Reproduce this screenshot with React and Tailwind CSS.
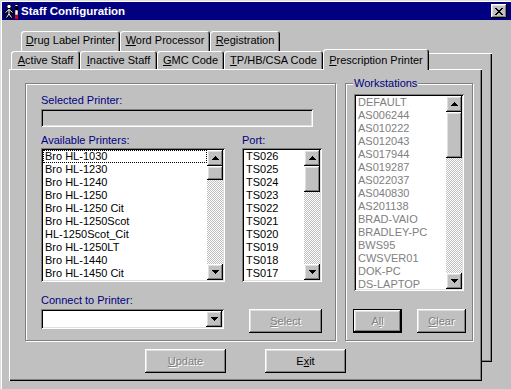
import React from "react";

// win98-ish bevels
const raised = "shadow-[inset_-1px_-1px_#000,inset_1px_1px_#fff,inset_-2px_-2px_#808080,inset_2px_2px_#dfdfdf]";
const sunken = "shadow-[inset_1px_1px_#808080,inset_-1px_-1px_#fff,inset_2px_2px_#000,inset_-2px_-2px_#dfdfdf]";
const etched = "border border-[#808080] shadow-[inset_1px_1px_#fff,1px_1px_#fff]";
const greyed = "text-[#808080] [text-shadow:1px_1px_#fff]";
const tabEdge = "bg-[#c0c0c0] rounded-t-[3px] shadow-[inset_1px_1px_#fff,inset_-1px_0_#000,inset_-2px_0_#808080]";

const PRINTERS = [
    "Bro HL-1030", "Bro HL-1230", "Bro HL-1240", "Bro HL-1250", "Bro HL-1250 Cit",
    "Bro HL-1250Scot", "HL-1250Scot_Cit", "Bro HL-1250LT", "Bro HL-1440", "Bro HL-1450 Cit"
];
const PORTS = ["TS026", "TS025", "TS024", "TS023", "TS022", "TS021", "TS020", "TS019", "TS018", "TS017"];
const STATIONS = [
    "DEFAULT", "AS006244", "AS010222", "AS012043", "AS017944", "AS019287", "AS022037", "AS040830",
    "AS201138", "BRAD-VAIO", "BRADLEY-PC", "BWS95", "CWSVER01", "DOK-PC", "DS-LAPTOP"
];

const Arrow = ({ down }) => (
    <svg width="7" height="4" viewBox="0 0 7 4" shapeRendering="crispEdges" className="block">
        {down ? (
            <>
                <rect x="0" y="0" width="7" height="1" />
                <rect x="1" y="1" width="5" height="1" />
                <rect x="2" y="2" width="3" height="1" />
                <rect x="3" y="3" width="1" height="1" />
            </>
        ) : (
            <>
                <rect x="3" y="0" width="1" height="1" />
                <rect x="2" y="1" width="3" height="1" />
                <rect x="1" y="2" width="5" height="1" />
                <rect x="0" y="3" width="7" height="1" />
            </>
        )}
    </svg>
);

const ScrollBtn = ({ down }) => (
    <div className={`w-[16px] h-[16px] shrink-0 bg-[#c0c0c0] flex items-center justify-center ${raised}`}>
        <Arrow down={down} />
    </div>
);

const ListBox = ({ items, box, thumb, itemColor, focusFirst }) => (
    <div className={`${box} p-[2px] bg-white flex ${sunken}`}>
        <div className="flex-1 overflow-hidden">
            {items.map((it, i) => (
                <div
                    key={it}
                    className={`h-[13px] whitespace-nowrap ${itemColor} ${focusFirst && i === 0 ? "border border-dotted border-black pl-[1px] leading-[11px]" : "pl-[2px] leading-[13px]"}`}
                >
                    {it}
                </div>
            ))}
        </div>
        <div className="w-[16px] flex flex-col">
            <ScrollBtn />
            <div className={`${thumb} w-[16px] shrink-0 bg-[#c0c0c0] ${raised}`}></div>
            <div className="flex-1 bg-[repeating-conic-gradient(#c0c0c0_0_25%,#ffffff_0_50%)] bg-[length:2px_2px]"></div>
            <ScrollBtn down />
        </div>
    </div>
);

const Btn = ({ box, children, off, def }) => (
    <div className={`${box} bg-[#c0c0c0] flex items-center justify-center ${def ? "border border-black" : ""} ${raised} ${off ? greyed : "text-black"}`}>
        {children}
    </div>
);

const Tab = ({ box, children }) => (
    <div className={`${box} ${tabEdge} flex justify-center pt-[3px] whitespace-nowrap`}>{children}</div>
);

// little staff figure + pen, white on navy with dark outline
const AppIcon = () => (
    <svg width="16" height="16" viewBox="0 0 16 16" className="block shrink-0">
        <g stroke="#000" strokeWidth="3" fill="none" strokeLinecap="square">
            <path d="M6 6v5M2.5 9.5L6 6.5l3.5 3M6 11l-2.5 3.5M6 11l2.5 3.5" />
        </g>
        <circle cx="6" cy="3.5" r="2.2" fill="#fff" stroke="#000" strokeWidth="1" />
        <g stroke="#fff" strokeWidth="1" fill="none">
            <path d="M6 6v5M2.5 9.5L6 6.5l3.5 3M6 11l-2.5 3.5M6 11l2.5 3.5" />
        </g>
        <rect x="12" y="1" width="3" height="6" fill="#000" />
        <rect x="12.5" y="2" width="2" height="1" fill="#fff" />
        <rect x="12" y="7" width="3" height="5" fill="#fff" stroke="#000" strokeWidth="0.5" />
        <rect x="12" y="12" width="3" height="4" fill="#e00000" />
    </svg>
);

const CloseGlyph = () => (
    <svg width="8" height="7" viewBox="0 0 8 7" shapeRendering="crispEdges">
        <path d="M0 0h2v1H0zM6 0h2v1H6zM1 1h2v1H1zM5 1h2v1H5zM2 2h4v1H2zM3 3h2v1H3zM2 4h4v1H2zM1 5h2v1H1zM5 5h2v1H5zM0 6h2v1H0zM6 6h2v1H6z" />
    </svg>
);

export default function App() {
    return (
        <div className="relative w-[511px] h-[389px] overflow-hidden bg-[#c0c0c0] font-['Liberation_Sans',Arial,sans-serif] text-[11px] leading-[13px] text-black shadow-[inset_1px_1px_#dfdfdf,inset_2px_2px_#fff]">
            {/* title bar */}
            <div className="mt-[2px] ml-[2px] w-[509px] h-[18px] bg-[#000080] flex items-center">
                <div className="ml-[1px]"><AppIcon /></div>
                <span className="ml-[2px] text-white font-bold text-[11.5px]">Staff Configuration</span>
                <div className={`ml-auto mr-[4px] w-[16px] h-[14px] bg-[#c0c0c0] flex items-center justify-center ${raised}`}>
                    <CloseGlyph />
                </div>
            </div>

            {/* tab control */}
            <div className="relative mt-[11px]">
                <div className="absolute left-[19px] top-[22px] w-[473px] h-[309px] shadow-[inset_1px_1px_#fff,inset_-1px_-1px_#000,inset_-2px_-2px_#808080]"></div>

                <div className="relative flex ml-[21px] h-[20px] -mb-[2px]">
                    <Tab box="w-[99px] h-[20px]"><span><u>D</u>rug Label Printer</span></Tab>
                    <Tab box="w-[90px] h-[20px]"><span><u>W</u>ord Processor</span></Tab>
                    <Tab box="w-[70px] h-[20px]"><span><u>R</u>egistration</span></Tab>
                </div>

                <div className="relative z-10 flex items-start ml-[11px] h-[20px]">
                    <Tab box="mt-[2px] w-[69px] h-[18px]"><span><u>A</u>ctive Staff</span></Tab>
                    <Tab box="mt-[2px] w-[77px] h-[18px]"><span><u>I</u>nactive Staff</span></Tab>
                    <Tab box="mt-[2px] w-[67px] h-[18px]"><span><u>G</u>MC Code</span></Tab>
                    <Tab box="mt-[2px] w-[99px] h-[18px]"><span><u>T</u>P/HB/CSA Code</span></Tab>
                    <Tab box="w-[106px] h-[21px] pt-[5px]"><span><u>P</u>rescription Printer</span></Tab>
                </div>

                {/* page */}
                <div className="relative ml-[9px] w-[473px] h-[312px] bg-[#c0c0c0] pt-[14px] pl-[16px] shadow-[inset_1px_1px_#fff,inset_-1px_-1px_#000,inset_-2px_-2px_#808080]">
                    <div className="flex">
                        <div className={`${etched} w-[311px] h-[258px] pt-[10px] pl-[15px]`}>
                            <div className="text-[#000080]">Selected Printer:</div>
                            <div className={`mt-[2px] w-[272px] h-[18px] ${sunken}`}></div>

                            <div className="mt-[7px] flex text-[#000080]">
                                <div className="w-[184px]">Available Printers:</div>
                                <div className="ml-[17px]">Port:</div>
                            </div>
                            <div className="mt-[1px] flex gap-[17px]">
                                <ListBox items={PRINTERS} box="w-[184px] h-[134px]" thumb="h-[14px]" itemColor="text-black" focusFirst />
                                <ListBox items={PORTS} box="w-[80px] h-[134px]" thumb="h-[26px]" itemColor="text-black" />
                            </div>

                            <div className="mt-[12px] text-[#000080]">Connect to Printer:</div>
                            <div className="mt-[2px] flex items-start">
                                <div className={`w-[183px] h-[20px] p-[2px] bg-white flex justify-end ${sunken}`}>
                                    <ScrollBtn down />
                                </div>
                                <Btn box="ml-[25px] w-[73px] h-[24px]" off><span><u>S</u>elect</span></Btn>
                            </div>
                        </div>

                        <div className={`relative ${etched} ml-[9px] w-[128px] h-[258px] pt-[10px]`}>
                            <div className="absolute left-[7px] -top-[7px] px-[1px] bg-[#c0c0c0] text-[#000080]">Workstations</div>
                            <ListBox items={STATIONS} box="ml-[8px] w-[110px] h-[197px]" thumb="h-[46px]" itemColor="text-[#808080]" />
                            <div className="mt-[18px] ml-[7px] flex gap-[15px]">
                                <Btn box="w-[49px] h-[24px]" off def><span>A<u>l</u>l</span></Btn>
                                <Btn box="w-[49px] h-[24px]" off><span><u>C</u>lear</span></Btn>
                            </div>
                        </div>
                    </div>

                    <div className="mt-[8px] ml-[120px] flex gap-[39px]">
                        <Btn box="w-[81px] h-[24px]" off><span><u>U</u>pdate</span></Btn>
                        <Btn box="w-[81px] h-[24px]"><span>E<u>x</u>it</span></Btn>
                    </div>
                </div>
            </div>
        </div>
    );
}
